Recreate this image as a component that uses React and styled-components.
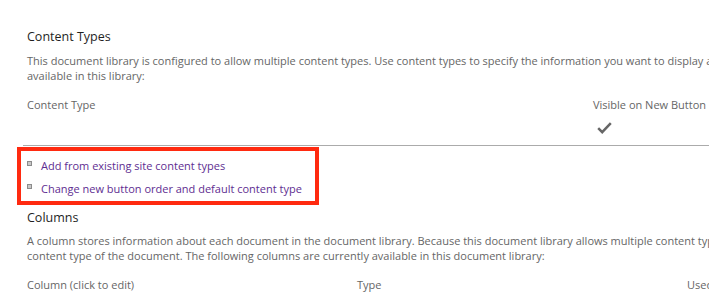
import React from "react";
import styled, { createGlobalStyle } from "styled-components";

const Global = createGlobalStyle`
  html, body { margin: 0; padding: 0; background: #fff; }
  body { font-family: "Open Sans", "Noto Sans", sans-serif; }
  #root { width: 709px; height: 293px; overflow: hidden; }
`;

const Page = styled.div`
  width: 1200px;
  padding-top: 28px;
`;

const Heading = styled.h3`
  margin: 0;
  padding-left: 27px;
  font-weight: 400;
  font-size: 12.5px;
  line-height: 18px;
  color: #1f1f1f;
`;

const Desc = styled.div`
  padding-left: 27px;
  margin-top: ${(p) => p.$top || 5}px;
  font-size: 11px;
  line-height: 15px;
  color: #666;
`;

const Line = styled.div`
  white-space: nowrap;
`;

const Table = styled.div`
  margin-left: 23px;
  margin-top: ${(p) => p.$top || 0}px;
  width: 1000px;
  display: grid;
  grid-template-columns: ${(p) => p.$cols};
  border-bottom: ${(p) => (p.$rule ? "1px solid #ababab" : "none")};
  padding-bottom: ${(p) => p.$pb || 0}px;
`;

const HeadCell = styled.div`
  padding-left: 4px;
  font-size: 11px;
  line-height: 15px;
  color: #666;
  white-space: nowrap;
`;

const CheckCell = styled.div`
  padding-left: 8px;
  padding-top: 10px;
  height: 12px;
  display: flex;
  align-items: center;
`;

const LinkBox = styled.div`
  box-sizing: border-box;
  margin-left: 17px;
  margin-top: 1px;
  width: 302px;
  height: 58px;
  border: 4px solid #ff2a10;
  padding: 6px 0 5px 6px;
  display: flex;
  flex-direction: column;
  gap: 7px;
`;

const LinkRow = styled.div`
  display: flex;
  align-items: center;
  height: 16px;
`;

const Bullet = styled.span`
  width: 3px;
  height: 3px;
  border: 1px solid #8c8c8c;
  background: #c8c8c8;
  margin-right: 9px;
  margin-top: -3px;
  flex: none;
`;

const Link = styled.a`
  font-size: 11px;
  line-height: 15px;
  color: #5e2d91;
  text-decoration: none;
  white-space: nowrap;
`;

const SectionGap = styled.div`
  height: ${(p) => p.$h}px;
`;

const Check = () => (
  <svg width="15" height="12" viewBox="0 0 15 12">
    <path d="M1.2 6.2 L5.2 10.2 L13.8 1.2" fill="none" stroke="#666" strokeWidth="2.5" />
  </svg>
);

export default function App() {
  return (
    <Page>
      <Global />
      <Heading>Content Types</Heading>
      <Desc $top={7}>
        <Line>
          This document library is configured to allow multiple content types. Use content types to specify the information you want to display about an item, in addition to its policies, workflows, or other behavior. The following content types are currently
        </Line>
        <Line>available in this library:</Line>
      </Desc>
      <Table $cols="566px 200px" $top={14} $rule $pb={11}>
        <HeadCell>Content Type</HeadCell>
        <HeadCell>Visible on New Button</HeadCell>
        <div />
        <CheckCell>
          <Check />
        </CheckCell>
      </Table>
      <LinkBox>
        <LinkRow>
          <Bullet />
          <Link href="#">Add from existing site content types</Link>
        </LinkRow>
        <LinkRow>
          <Bullet />
          <Link href="#">Change new button order and default content type</Link>
        </LinkRow>
      </LinkBox>
      <SectionGap $h={4} />
      <Heading>Columns</Heading>
      <Desc $top={6}>
        <Line>
          A column stores information about each document in the document library. Because this document library allows multiple content types, some column settings, such as whether information is required or optional for a column, are now specified by the
        </Line>
        <Line>content type of the document. The following columns are currently available in this document library:</Line>
      </Desc>
      <Table $cols="330px 330px 200px" $top={14}>
        <HeadCell>Column (click to edit)</HeadCell>
        <HeadCell>Type</HeadCell>
        <HeadCell>Used in</HeadCell>
      </Table>
    </Page>
  );
}
